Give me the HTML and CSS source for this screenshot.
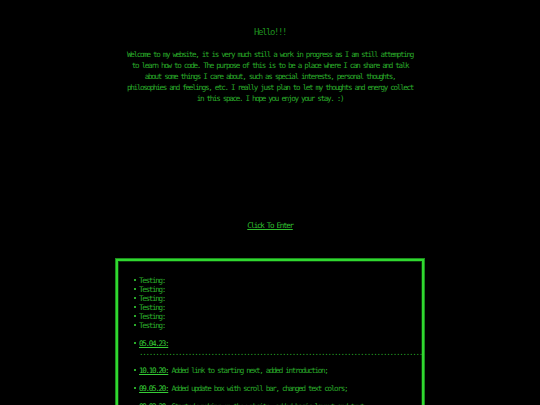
FILE: index.html
```html
<!DOCTYPE html>
<html>
<head>
<meta charset="utf-8">
<link rel="stylesheet" href="styles.css">
</head>
<body>
<main class="page">
  <header class="intro">
    <h1 class="title">Hello!!!</h1>
    <p class="welcome">Welcome to my website, it is very much still a work in progress as I am still attempting to learn how to code. The purpose of this is to be a place where I can share and talk about some things I care about, such as special interests, personal thoughts, philosophies and feelings, etc. I really just plan to let my thoughts and energy collect in this space. I hope you enjoy your stay. :)</p>
  </header>
  <div class="enter"><a class="enter-link" href="#">Click To Enter</a></div>
  <section class="updates">
    <ul class="update-list">
      <li class="item"><span class="bullet"></span>Testing:</li>
      <li class="item"><span class="bullet"></span>Testing:</li>
      <li class="item"><span class="bullet"></span>Testing:</li>
      <li class="item"><span class="bullet"></span>Testing:</li>
      <li class="item"><span class="bullet"></span>Testing:</li>
      <li class="item"><span class="bullet"></span>Testing:</li>
      <li class="item spaced"><span class="bullet"></span><a class="date" href="#">05.04.23:</a>
        <div class="dots">........................................................................................................</div>
      </li>
      <li class="item spaced"><span class="bullet"></span><a class="date" href="#">10.10.20:</a> Added link to starting next, added introduction;</li>
      <li class="item spaced"><span class="bullet"></span><a class="date" href="#">09.05.20:</a> Added update box with scroll bar, changed text colors;</li>
      <li class="item spaced"><span class="bullet"></span><a class="date" href="#">09.02.20:</a> Started working on the website, added basic layout and text;</li>
    </ul>
  </section>
</main>
</body>
</html>
```
FILE: styles.css
```css
html, body {
  margin: 0;
  padding: 0;
  background: #000;
}

body {
  font-family: "DejaVu Sans Mono", "Liberation Mono", monospace;
  font-size: 7.6px;
  letter-spacing: -1.32px;
  color: #2aab2a;
  overflow: hidden;
  height: 405px;
}

.page {
  display: flex;
  flex-direction: column;
  align-items: center;
}

.intro {
  padding-top: 27px;
  display: flex;
  flex-direction: column;
  align-items: center;
}

.title {
  margin: 0;
  font-size: 9px;
  letter-spacing: -1.42px;
  line-height: 11px;
  font-weight: normal;
  color: #1f8f1f;
  text-align: center;
}

.welcome {
  width: 291px;
  margin: 11px 0 0;
  line-height: 11px;
  text-align: center;
}

.enter {
  margin-top: 116px;
  line-height: 11px;
}

.enter-link {
  color: #2fbf2f;
  text-decoration: underline;
}

.updates {
  margin-top: 28px;
  width: 300px;
  height: 300px;
  border: 2px solid #30d830;
  outline: 1px solid #1c8f1c;
  box-shadow: inset 0 0 0 1px #0c3a0c;
  overflow: hidden;
  padding: 15px 2px 0;
}

.update-list {
  list-style: none;
  margin: 0;
  padding: 0 0 0 14px;
  line-height: 9px;
}

.item {
  white-space: nowrap;
}

.spaced {
  margin-top: 9px;
}

.bullet {
  display: inline-block;
  width: 2px;
  height: 2px;
  background: #2aab2a;
  margin-right: 3px;
  vertical-align: 2px;
}

.date {
  color: #36cc36;
  text-decoration: underline;
}

.dots {
  padding-left: 5px;
  white-space: nowrap;
  color: #2aab2a;
}
```
